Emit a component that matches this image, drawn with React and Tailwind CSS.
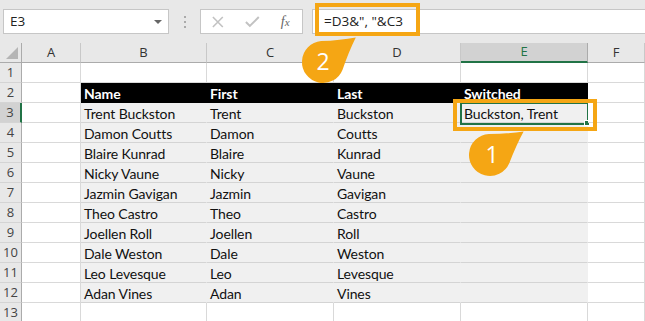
import React from 'react';

const COLS = 'grid grid-cols-[22px_59px_126px_127px_127px_127px_57px]';
const cellFont = { fontFamily: 'Lato, "Open Sans", sans-serif' };
const uiFont = { fontFamily: '"Open Sans", "Noto Sans", sans-serif' };

const people = [
  ['Trent Buckston', 'Trent', 'Buckston', 'Buckston, Trent'],
  ['Damon Coutts', 'Damon', 'Coutts', ''],
  ['Blaire Kunrad', 'Blaire', 'Kunrad', ''],
  ['Nicky Vaune', 'Nicky', 'Vaune', ''],
  ['Jazmin Gavigan', 'Jazmin', 'Gavigan', ''],
  ['Theo Castro', 'Theo', 'Castro', ''],
  ['Joellen Roll', 'Joellen', 'Roll', ''],
  ['Dale Weston', 'Dale', 'Weston', ''],
  ['Leo Levesque', 'Leo', 'Levesque', ''],
  ['Adan Vines', 'Adan', 'Vines', ''],
];

function RowHead({ n, active }) {
  return (
    <div
      className={`h-[20px] flex items-center justify-center text-[13px] text-[#444] border-b border-[#d4d4d4] ${
        active ? 'bg-[#d2d2d2] border-r-2 border-r-[#217346]' : 'bg-[#e8e8e8] border-r border-r-[#ababab]'
      }`}
      style={uiFont}
    >
      {n}
    </div>
  );
}

function Cell({ children, kind = 'plain', className = '' }) {
  const look =
    kind === 'head'
      ? 'bg-black text-white font-bold border-b-black border-r-transparent'
      : kind === 'data'
        ? 'bg-[#f0f0f0] text-[#111] border-b-[#d4d4d4] border-r-transparent'
        : 'bg-white border-b-[#d9d9d9] border-r-[#d9d9d9]';
  return (
    <div
      className={`relative h-[20px] border-b border-r flex items-end pl-[3px] text-[14px] leading-[16px] tracking-[-0.1px] whitespace-nowrap ${look} ${className}`}
      style={cellFont}
    >
      {children}
    </div>
  );
}

function Teardrop({ cx, cy, angle, label, dx = 0 }) {
  return (
    <g>
      <path
        d="M 11.03 -17.87 A 21 21 0 1 0 11.03 17.87 Q 27 7 41 0 Q 27 -7 11.03 -17.87 Z"
        fill="#F5A614"
        transform={`translate(${cx} ${cy}) rotate(${angle})`}
      />
      <text
        x={cx + dx}
        y={cy + 8}
        textAnchor="middle"
        fill="#fff"
        fontSize="23"
        fontFamily='"Open Sans", "Noto Sans", sans-serif'
      >
        {label}
      </text>
    </g>
  );
}

export default function App() {
  return (
    <div className="relative w-[645px] h-[321px] overflow-hidden bg-white">
      {/* formula bar */}
      <div className="h-[43px] bg-[#e8e8e8] flex items-center pl-[3px]" style={uiFont}>
        <div className="w-[166px] h-[25px] bg-white border border-[#c6c6c6] flex items-center justify-between px-[6px] text-[13.5px] text-[#222]">
          <span>E3</span>
          <span className="w-0 h-0 border-l-[4px] border-r-[4px] border-t-[4px] border-l-transparent border-r-transparent border-t-[#666]" />
        </div>
        <div className="w-[31px] flex flex-col items-center gap-[3px]">
          <span className="w-[2px] h-[2px] bg-[#aaa]" />
          <span className="w-[2px] h-[2px] bg-[#aaa]" />
          <span className="w-[2px] h-[2px] bg-[#aaa]" />
        </div>
        <div className="w-[103px] h-[25px] bg-white border border-[#c6c6c6] flex items-center">
          <svg width="34" height="14" viewBox="0 0 34 14">
            <path d="M12 2 L22 12 M22 2 L12 12" stroke="#c2c2c2" strokeWidth="1.6" />
          </svg>
          <svg width="34" height="14" viewBox="0 0 34 14">
            <path d="M11 7 L15 11 L24 2" stroke="#c2c2c2" strokeWidth="2" fill="none" />
          </svg>
          <span className="w-[34px] text-center italic text-[#666] text-[14px]" style={{ fontFamily: '"Liberation Serif", serif' }}>
            f<span className="text-[11px]">x</span>
          </span>
        </div>
        <div className="flex-1 h-[25px] ml-[9px] bg-white border-l border-y border-[#c6c6c6] flex items-center pl-[11px] text-[13.5px] text-[#222]">
          =D3&amp;", "&amp;C3
        </div>
      </div>

      {/* column headers */}
      <div className={COLS}>
        <div className="relative h-[20px] bg-[#e8e8e8] border-r border-b border-[#ababab]">
          <svg className="absolute right-[3px] bottom-[3px]" width="12" height="12" viewBox="0 0 12 12">
            <path d="M12 0 L12 12 L0 12 Z" fill="#b5b5b5" />
          </svg>
        </div>
        {['A', 'B', 'C', 'D', 'E', 'F'].map((c) => (
          <div
            key={c}
            className={`h-[20px] flex items-center justify-center text-[13px] border-r ${
              c === 'E'
                ? 'bg-[#d2d2d2] text-[#217346] border-r-[#ababab] border-b-2 border-b-[#217346]'
                : 'bg-[#e8e8e8] text-[#333] border-r-[#c8c8c8] border-b border-b-[#ababab]'
            }`}
            style={uiFont}
          >
            {c}
          </div>
        ))}
      </div>

      {/* row 1 */}
      <div className={COLS}>
        <RowHead n={1} />
        {[0, 1, 2, 3, 4, 5].map((i) => (
          <Cell key={i} />
        ))}
      </div>

      {/* row 2 – table header */}
      <div className={COLS}>
        <RowHead n={2} />
        <Cell />
        <Cell kind="head">Name</Cell>
        <Cell kind="head">First</Cell>
        <Cell kind="head">Last</Cell>
        <Cell kind="head">Switched</Cell>
        <Cell />
      </div>

      {people.map((p, i) => (
        <div key={i} className={`${COLS} ${i === 0 ? 'relative z-10' : ''}`}>
          <RowHead n={i + 3} active={i === 0} />
          <Cell />
          <Cell kind="data">{p[0]}</Cell>
          <Cell kind="data">{p[1]}</Cell>
          <Cell kind="data">{p[2]}</Cell>
          <Cell kind="data">
            {p[3]}
            {i === 0 && (
              <>
                <span className="absolute -left-[1px] -top-[1px] -right-[2px] -bottom-[3px] border-2 border-[#217346]" />
                <span className="absolute -right-[3px] -bottom-[4px] w-[6px] h-[6px] bg-[#217346] border border-white" />
              </>
            )}
          </Cell>
          <Cell />
        </div>
      ))}

      {/* row 13 */}
      <div className={COLS}>
        <RowHead n={13} />
        {[0, 1, 2, 3, 4, 5].map((i) => (
          <Cell key={i} />
        ))}
      </div>

      {/* callouts */}
      <div className="absolute z-20 left-[315px] top-[3px] w-[105px] h-[33px] border-[4px] border-[#F5A614]" />
      <div className="absolute z-20 left-[453px] top-[99px] w-[144px] h-[32px] border-[4px] border-[#F5A614]" />
      <svg className="absolute z-20 left-0 top-0 pointer-events-none" width="645" height="321">
        <Teardrop cx={323} cy={62} angle={-36.9} label="2" />
        <Teardrop cx={490} cy={155} angle={-34.9} label="1" dx={2} />
      </svg>
    </div>
  );
}
